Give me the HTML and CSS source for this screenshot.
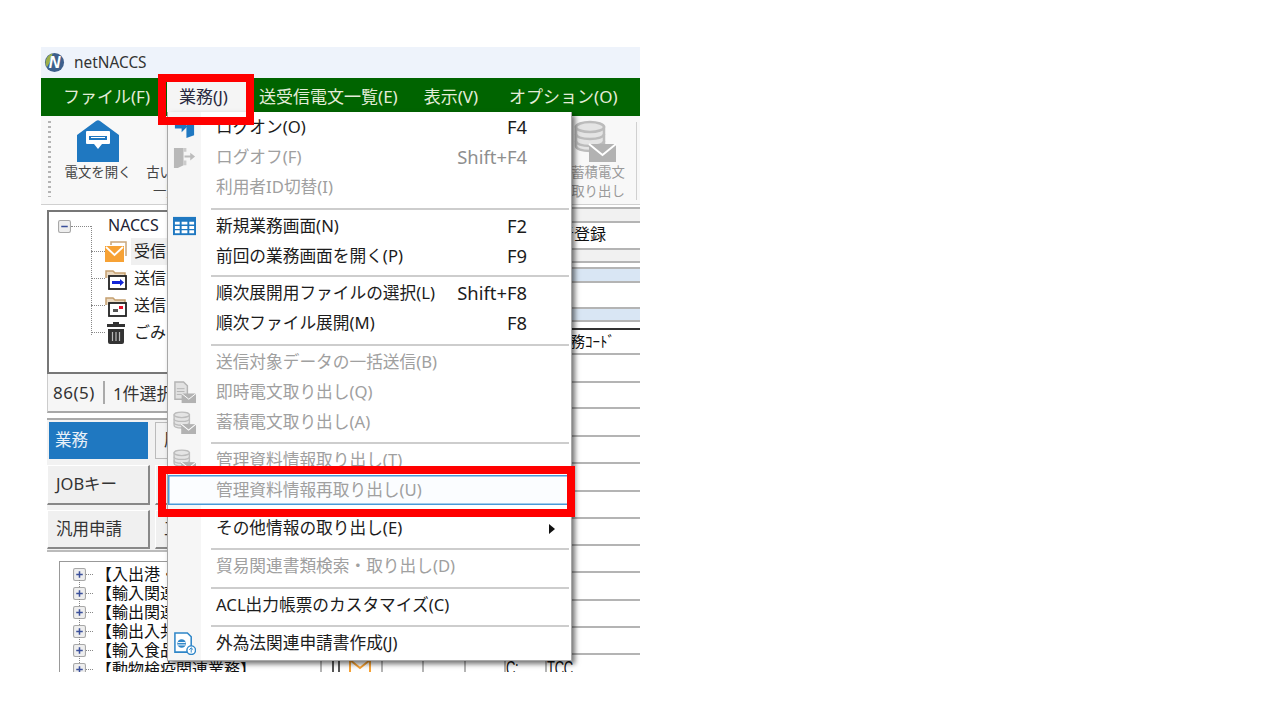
FILE: index.html
```html
<!DOCTYPE html>
<html lang="ja">
<head>
<meta charset="utf-8">
<title>netNACCS</title>
<link rel="stylesheet" href="styles.css">
</head>
<body>
<svg class="defs" width="0" height="0" aria-hidden="true">
  <symbol id="dbmail" viewBox="0 0 42 42">
    <g fill="#e4e4e4" stroke="#bcbcbc" stroke-width="2.500">
      <path d="M2 26V7h28v19c0 3-6 5-14 5S2 29 2 26z"/>
      <ellipse cx="16" cy="7" rx="14" ry="5"/>
      <path d="M2 14c0 3 6 5 14 5s14-2 14-5M2 21c0 3 6 5 14 5s14-2 14-5" fill="none"/>
    </g>
    <path d="M15 24h27v18H15z" fill="#b2b2b2"/>
    <path d="M15 24l13.500 11L42 24" fill="none" stroke="#fff" stroke-width="2"/>
  </symbol>
  <symbol id="docmail" viewBox="0 0 24 24">
    <path d="M2 1h9l4 4v14H2z" fill="#e2e2e2" stroke="#b4b4b4" stroke-width="1.500"/>
    <path d="M4 8h8M4 11h8M4 14h5" stroke="#b4b4b4"/>
    <path d="M9 13h15v10H9z" fill="#b2b2b2"/>
    <path d="M9 13l7.500 6L24 13" fill="none" stroke="#fff"/>
  </symbol>
  <symbol id="treeplus" viewBox="0 0 12 12">
    <rect x=".5" y=".5" width="11" height="11" rx="1.500" fill="#eee" stroke="#a8a8a8"/>
    <path d="M3 6h6M6 3v6" stroke="#3a4f9a" stroke-width="1.400"/>
  </symbol>
</svg>

<div class="window">
  <header class="titlebar">
    <svg class="logo" viewBox="0 0 22 22">
      <circle cx="11" cy="11" r="10" fill="#3d5f8c"/>
      <path d="M3 16A10 10 0 0 1 9 1.500L6 11z" fill="#9db04a"/>
      <text class="logo-n" x="11" y="17">N</text>
    </svg>
    <span class="app-name">netNACCS</span>
  </header>

  <nav class="menubar">
    <span class="menu-item">ファイル(F)</span>
    <span class="menu-item active">業務(J)</span>
    <span class="menu-item">送受信電文一覧(E)</span>
    <span class="menu-item">表示(V)</span>
    <span class="menu-item">オプション(O)</span>
  </nav>

  <section class="toolbar">
    <div class="gripper"></div>
    <div class="tool">
      <svg class="tool-icon" viewBox="0 0 42 42">
        <path d="M0 15L19 1q2-1.500 4 0l19 14v27H0z" fill="#1f78c1"/>
        <path d="M10 11h22q1 0 1 1v11q0 1-1 1H25l-4 5-4-5h-7q-1 0-1-1V12q0-1 1-1z" fill="#fff"/>
        <path d="M12 16h18v4H12z" fill="#1f78c1"/>
        <path d="M14 17.500h14" stroke="#fff"/>
      </svg>
      <span>電文を開く</span>
    </div>
    <div class="tool tool-old">
      <svg class="tool-icon" viewBox="0 0 42 42">
        <rect x="2" y="2" width="38" height="38" fill="none" stroke="#1f78c1" stroke-width="4" stroke-dasharray="5 4"/>
      </svg>
      <span>古い電文</span>
      <span>一覧表</span>
    </div>
    <div class="spacer"></div>
    <div class="tool tool-off">
      <svg class="tool-icon"><use href="#dbmail"/></svg>
      <span>蓄積電文</span>
      <span>取り出し</span>
    </div>
    <div class="tool-sep"></div>
  </section>

  <main class="main">
    <aside class="left">
      <div class="tree-box">
        <div class="tree-root">
          <svg class="tree-toggle" viewBox="0 0 12 12">
            <rect x=".5" y=".5" width="11" height="11" rx="1.500" fill="#eee" stroke="#a8a8a8"/>
            <path d="M3 6h6" stroke="#3a4f9a" stroke-width="1.400"/>
          </svg>
          <span class="root-name">NACCS</span>
        </div>
        <ul class="tree-list">
          <li class="tree-row">
            <svg class="tree-icon" viewBox="0 0 22 22">
              <path d="M6 4V1h15v14" fill="none" stroke="#c9a77c" stroke-width="1.500"/>
              <path d="M0 5h19v16H0z" fill="#f7a235"/>
              <path d="M1 6l8.500 8L18 6" fill="none" stroke="#fff" stroke-width="1.800"/>
            </svg>
            <span class="tree-label selected">受信</span>
          </li>
          <li class="tree-row">
            <svg class="tree-icon" viewBox="0 0 22 22">
              <path d="M1 10V3h7l2 2h10v3" fill="#ead9c2" stroke="#c5a070" stroke-width="1.500"/>
              <rect x="4" y="8" width="17" height="13" fill="#fff" stroke="#222" stroke-width="1.800"/>
              <path d="M7 13h8v-2l4 3.500-4 3.500v-2H7z" fill="#1226d8"/>
            </svg>
            <span class="tree-label">送信</span>
          </li>
          <li class="tree-row">
            <svg class="tree-icon" viewBox="0 0 22 22">
              <path d="M1 10V3h7l2 2h10v3" fill="#ead9c2" stroke="#c5a070" stroke-width="1.500"/>
              <rect x="4" y="8" width="17" height="13" fill="#fff" stroke="#222" stroke-width="1.800"/>
              <path d="M8 14h5v3H8z" fill="#555"/>
              <path d="M14 11h4v3h-4z" fill="#e8102a"/>
            </svg>
            <span class="tree-label">送信</span>
          </li>
          <li class="tree-row">
            <svg class="tree-icon" viewBox="0 0 22 22">
              <path d="M8 0h6v2h6v3H2V2h6z" fill="#333"/>
              <path d="M3 7h16v13q0 2-2 2H5q-2 0-2-2z" fill="#333"/>
              <path d="M7.500 10v9M11 10v9M14.500 10v9" stroke="#bbb" stroke-width="1.200"/>
            </svg>
            <span class="tree-label">ごみ</span>
          </li>
        </ul>
      </div>

      <div class="status">
        <span class="count">86(5)</span>
        <span class="selection">1件選択</span>
      </div>

      <div class="tabs">
        <div class="tab-row tab-row-first">
          <span class="tab tab-on">業務</span>
          <span class="tab tab-next">履</span>
        </div>
        <div class="tab-row tab-row-job">
          <span class="tab tab-raised">JOBキー</span>
          <span class="tab tab-next tab-raised"></span>
        </div>
        <div class="tab-row">
          <span class="tab tab-raised">汎用申請</span>
          <span class="tab tab-next tab-raised">工</span>
        </div>
      </div>

      <div class="job-tree">
        <div class="job-row"><svg class="job-plus"><use href="#treeplus"/></svg><span>【入出港・</span></div>
        <div class="job-row"><svg class="job-plus"><use href="#treeplus"/></svg><span>【輸入関連</span></div>
        <div class="job-row"><svg class="job-plus"><use href="#treeplus"/></svg><span>【輸出関連</span></div>
        <div class="job-row"><svg class="job-plus"><use href="#treeplus"/></svg><span>【輸出入共</span></div>
        <div class="job-row"><svg class="job-plus"><use href="#treeplus"/></svg><span>【輸入食品</span></div>
        <div class="job-row"><svg class="job-plus"><use href="#treeplus"/></svg><span>【動物検疫関連業務】</span></div>
      </div>
    </aside>

    <section class="grid">
      <div class="g-row r4"></div>
      <div class="g-row r14 shade"></div>
      <div class="g-row r27 has-text"><span class="reg">者登録</span></div>
      <div class="g-row r13 shade"></div>
      <div class="g-row r6"></div>
      <div class="g-row r14 blue"></div>
      <div class="g-row r26"></div>
      <div class="g-row r13 blue"></div>
      <div class="g-row r8 dark"></div>
      <div class="g-row r25 has-code"><span class="code">務ｺｰﾄﾞ</span></div>
      <div class="g-row r28"></div>
      <div class="g-row r26"></div>
      <div class="g-row r28"></div>
      <div class="g-row r27"></div>
      <div class="g-row r28"></div>
      <div class="g-row r27"></div>
      <div class="g-row r27"></div>
      <div class="g-row r27"></div>
      <div class="g-row r28"></div>
      <div class="g-row r27"></div>
      <div class="g-row r27"></div>
      <div class="g-strip">
        <span class="cell c12"></span>
        <span class="cell c6"></span>
        <span class="cell c43">
          <svg class="mail-mini" viewBox="0 0 22 16">
            <rect x="1" y="1" width="20" height="14" fill="none" stroke="#f7a235" stroke-width="2"/>
            <path d="M1 2l10 8 10-8" fill="none" stroke="#f7a235" stroke-width="2"/>
          </svg>
        </span>
        <span class="cell c41"></span>
        <span class="cell c42"></span>
        <span class="cell c40"></span>
        <span class="cell c41"><span class="tall">C:</span></span>
        <span class="cell c-last"><span class="tall">TCC</span></span>
      </div>
    </section>
  </main>

  <div class="dropdown">
    <div class="dd-row">
      <span class="dd-ico">
        <svg viewBox="0 0 24 24"><path d="M14 1h8v19l-8 3z" fill="#1f78c1"/><path d="M2 9h7V5l6 6-6 6v-4H2z" fill="#1f78c1"/></svg>
      </span>
      <span class="dd-text">ログオン(O)</span><span class="dd-key">F4</span>
    </div>
    <div class="dd-row off">
      <span class="dd-ico">
        <svg viewBox="0 0 24 24"><path d="M1 2h10v18l-6 3H1z" fill="#b8b8b8"/><path d="M11 2h3v4h-3zM11 15h3v5h-3z" fill="#ccc"/><path d="M12 10h6V7l5 4-5 4v-3h-6z" fill="#bcbcbc"/></svg>
      </span>
      <span class="dd-text">ログオフ(F)</span><span class="dd-key">Shift+F4</span>
    </div>
    <div class="dd-row off"><span class="dd-ico"></span><span class="dd-text">利用者ID切替(I)</span></div>
    <div class="dd-sep s9"></div>
    <div class="dd-row">
      <span class="dd-ico">
        <svg viewBox="0 0 24 20"><rect width="24" height="19" fill="#1f78c1"/><path d="M2 5h5v3H2zM9 5h6v3H9zM17 5h5v3h-5zM2 9.500h5v3H2zM9 9.500h6v3H9zM17 9.500h5v3h-5zM2 14h5v3H2zM9 14h6v3H9zM17 14h5v3h-5z" fill="#fff"/></svg>
      </span>
      <span class="dd-text">新規業務画面(N)</span><span class="dd-key">F2</span>
    </div>
    <div class="dd-row"><span class="dd-ico"></span><span class="dd-text">前回の業務画面を開く(P)</span><span class="dd-key">F9</span></div>
    <div class="dd-sep s7"></div>
    <div class="dd-row"><span class="dd-ico"></span><span class="dd-text">順次展開用ファイルの選択(L)</span><span class="dd-key">Shift+F8</span></div>
    <div class="dd-row"><span class="dd-ico"></span><span class="dd-text">順次ファイル展開(M)</span><span class="dd-key">F8</span></div>
    <div class="dd-sep s9"></div>
    <div class="dd-row off"><span class="dd-ico"></span><span class="dd-text">送信対象データの一括送信(B)</span></div>
    <div class="dd-row off"><span class="dd-ico"><svg viewBox="0 0 24 24"><use href="#docmail"/></svg></span><span class="dd-text">即時電文取り出し(Q)</span></div>
    <div class="dd-row off"><span class="dd-ico"><svg viewBox="0 0 24 24"><use href="#dbmail"/></svg></span><span class="dd-text">蓄積電文取り出し(A)</span></div>
    <div class="dd-sep"></div>
    <div class="dd-row off"><span class="dd-ico"><svg viewBox="0 0 24 24"><use href="#dbmail"/></svg></span><span class="dd-text">管理資料情報取り出し(T)</span></div>
    <div class="dd-row off hl"><span class="dd-ico"></span><span class="dd-text">管理資料情報再取り出し(U)</span></div>
    <div class="dd-sep"></div>
    <div class="dd-row"><span class="dd-ico"></span><span class="dd-text">その他情報の取り出し(E)</span><span class="dd-arrow"></span></div>
    <div class="dd-sep"></div>
    <div class="dd-row off"><span class="dd-ico"></span><span class="dd-text">貿易関連書類検索・取り出し(D)</span></div>
    <div class="dd-sep s9"></div>
    <div class="dd-row"><span class="dd-ico"></span><span class="dd-text">ACL出力帳票のカスタマイズ(C)</span></div>
    <div class="dd-sep"></div>
    <div class="dd-row">
      <span class="dd-ico">
        <svg viewBox="0 0 24 24"><path d="M2 1h13l4 4v16H2z" fill="#fff" stroke="#2f86c8" stroke-width="1.600"/><circle cx="9" cy="12" r="4.500" fill="#2f86c8"/><path d="M5 11h8M5 13.500h8" stroke="#fff"/><circle cx="19" cy="19" r="4.500" fill="#fff" stroke="#2f86c8" stroke-width="1.500"/><path d="M19 16.500v5M17 18.500l2-2 2 2" fill="none" stroke="#2f86c8"/></svg>
      </span>
      <span class="dd-text">外為法関連申請書作成(J)</span>
    </div>
  </div>

  <div class="callout callout-menu"></div>
  <div class="callout callout-item"></div>
</div>
</body>
</html>
```

FILE: styles.css
```css
* {
  box-sizing: border-box;
}

html,
body {
  margin: 0;
  height: 100%;
  background: #fff;
}

body {
  padding: 47px 0 0 41px;
  font-family: "Noto Sans", "Noto Sans CJK JP", sans-serif;
  color: #222;
  overflow: hidden;
}

.defs {
  position: absolute;
}

.window {
  position: relative;
  width: 599px;
  height: 625px;
  overflow: hidden;
  background: #fff;
}

/* title bar */
.titlebar {
  display: flex;
  align-items: center;
  height: 31px;
  padding: 0 0 1px 3px;
  background: #eef3fb;
}

.logo {
  width: 21px;
  height: 21px;
}

.logo-n {
  fill: #fff;
  font: italic 700 17px "Liberation Sans", sans-serif;
  text-anchor: middle;
}

.app-name {
  margin-left: 9px;
  font-size: 15.400px;
  color: #333;
}

/* menu bar */
.menubar {
  display: flex;
  height: 38px;
  padding: 4px 0 0 9px;
  background: #006400;
  color: #e4ecd8;
  font-size: 17px;
}

.menu-item {
  height: 30px;
  padding: 0 13px;
  line-height: 30px;
  white-space: nowrap;
}

.menu-item:last-child {
  margin-left: 5px;
}

.menu-item.active {
  width: 79px;
  margin-left: 4px;
  padding: 0 0 0 12px;
  background: #f5f5f5;
  color: #2a2a40;
}

/* toolbar */
.toolbar {
  display: flex;
  height: 89px;
  padding-left: 7px;
  background: #f8f8f8;
  border-bottom: 1px solid #d0d0d0;
}

.gripper {
  width: 3px;
  height: 76px;
  margin-top: 5px;
  background: repeating-linear-gradient(#b4b4b4 0 2px, transparent 2px 5px);
}

.tool {
  display: flex;
  flex-direction: column;
  align-items: center;
  flex: none;
  width: 68px;
  margin-left: 13px;
  font-size: 13.400px;
  line-height: 19px;
  color: #444;
  white-space: nowrap;
}

.tool-icon {
  width: 42px;
  height: 42px;
  margin: 4px 0 1px;
  flex: none;
}

.tool-old {
  width: 54px;
  margin-left: 14px;
}

.tool-old .tool-icon {
  margin-left: 30px;
}

.tool-off {
  width: 54px;
  margin-left: 0;
  color: #9a9a9a;
}

.tool-off .tool-icon {
  margin-right: 6px;
}

.spacer {
  flex: 1;
}

.tool-sep {
  width: 1px;
  height: 78px;
  margin: 6px 3px 0 11px;
  background: #d0d0d0;
}

/* main */
.main {
  display: flex;
  height: 467px;
}

.left {
  display: flex;
  flex-direction: column;
  flex: none;
  width: 279px;
  padding: 5px 0 0 6px;
}

.tree-box {
  flex: none;
  height: 164px;
  padding: 0 0 0 9px;
  background: #fff;
  border: 2px solid #777;
}

.tree-root {
  position: relative;
  display: flex;
  align-items: center;
  height: 26px;
  font-size: 16px;
}

.tree-root::after {
  content: "";
  position: absolute;
  left: 13px;
  top: 14px;
  width: 20px;
  border-top: 1px dotted #888;
}

.tree-toggle {
  width: 13px;
  height: 13px;
  flex: none;
  margin-top: 2px;
}

.root-name {
  margin-left: 37px;
  color: #223;
}

.tree-list {
  position: relative;
  margin: 0;
  padding: 0 0 0 47px;
  list-style: none;
}

.tree-list::before {
  content: "";
  position: absolute;
  left: 33px;
  top: -12px;
  height: 109px;
  border-left: 1px dotted #888;
}

.tree-row {
  position: relative;
  display: flex;
  align-items: center;
  height: 27px;
  font-size: 16px;
}

.tree-row::before {
  content: "";
  position: absolute;
  left: -14px;
  top: 13px;
  width: 14px;
  border-top: 1px dotted #888;
}

.tree-icon {
  width: 22px;
  height: 22px;
  flex: none;
}

.tree-label {
  height: 27px;
  margin-left: 4px;
  padding: 0 3px;
  line-height: 27px;
}

.tree-label.selected {
  background: #f0f0f0;
}

.status {
  display: flex;
  flex: none;
  align-items: center;
  height: 39px;
  font-size: 17px;
  color: #333;
  border-bottom: 2px solid #a8a8a8;
  border-left: 1px solid #ccc;
  background: #f6f6f6;
}

.count {
  padding: 0 8px 0 5px;
  letter-spacing: .5px;
  border-right: 2px solid #aaa;
}

.selection {
  margin-left: 8px;
}

.tabs {
  display: flex;
  flex: none;
  flex-direction: column;
  gap: 5px;
  height: 134px;
  margin-top: 5px;
  padding-top: 2px;
  background: #f2f2f2;
  border-top: 2px solid #aaa;
  border-bottom: 2px solid #bbb;
}

.tab-row {
  display: flex;
  flex: none;
  height: 39px;
  gap: 5px;
}

.tab-row-first {
  height: 37px;
  margin-bottom: 1px;
}

.tab-row-job {
  height: 40px;
}

.tab {
  display: flex;
  align-items: center;
  flex: none;
  width: 103px;
  padding: 0 0 3px 8px;
  font-size: 16.500px;
  color: #333;
  white-space: nowrap;
}

.tab-on {
  width: 99px;
  margin: 0 2px;
  padding: 0 0 4px 6px;
  background: #1f78c1;
  color: #e8f0f8;
}

.tab-next {
  width: 120px;
  border: 1px solid #bbb;
}

.tab-raised {
  background: #f0f0f0;
  border-top: 1px solid #fff;
  border-left: 1px solid #fff;
  border-right: 2px solid #888;
  border-bottom: 2px solid #888;
}

.job-tree {
  flex: 1;
  min-height: 0;
  margin: 9px 0 0 12px;
  padding: 3px 0 0 13px;
  border-top: 1px solid #999;
  border-left: 1px solid #999;
}

.job-row {
  position: relative;
  display: flex;
  align-items: center;
  height: 19px;
  font-size: 16px;
  line-height: 19px;
  color: #111;
  white-space: nowrap;
}

.job-row::before {
  content: "";
  position: absolute;
  left: 13px;
  top: 9px;
  width: 7px;
  border-top: 1px dotted #888;
}

.job-row::after {
  content: "";
  position: absolute;
  left: 6px;
  top: -4px;
  height: 7px;
  border-left: 1px dotted #888;
}

.job-row:first-child::after {
  display: none;
}

.job-plus {
  width: 13px;
  height: 13px;
  flex: none;
  margin-right: 10px;
}

/* grid on the right */
.grid {
  display: flex;
  flex-direction: column;
  flex: 1;
  min-width: 0;
  font-size: 14px;
  color: #111;
}

.g-row {
  flex: none;
  border-bottom: 2px solid #b4b4b4;
  background: #fff;
}

.r4 { height: 4px; }
.r6 { height: 6px; }
.r8 { height: 8px; }
.r13 { height: 13px; }
.r14 { height: 14px; }
.r25 { height: 25px; }
.r26 { height: 26px; }
.r27 { height: 27px; }
.r28 { height: 28px; }

.shade {
  background: #f1f1f1;
}

.blue {
  background: #d9e6f4;
}

.dark {
  border-bottom-color: #333;
}

.has-text {
  display: flex;
  align-items: center;
  padding: 0 0 5px 238px;
  white-space: nowrap;
}

.has-code {
  display: flex;
  align-items: center;
  padding: 0 0 3px 250px;
  white-space: nowrap;
}

.reg {
  font-size: 16px;
}

.code {
  font-size: 15px;
}

.g-strip {
  display: flex;
  flex: 1;
  font-family: "Liberation Sans", sans-serif;
  font-size: 13px;
  line-height: 13px;
}

.cell {
  flex: none;
  padding: 3px 0 0 0;
  border-left: 2px solid #b4b4b4;
  white-space: nowrap;
}

.tall {
  display: block;
  letter-spacing: -.3px;
  transform: scaleY(1.500);
  transform-origin: left top;
}

.c12 { width: 12px; }
.c6 { width: 6px; border-left-color: #555; }
.c43 { width: 43px; border-left-color: #555; }
.c40 { width: 40px; }
.c41 { width: 41px; }
.c42 { width: 42px; }

.mail-mini {
  display: block;
  width: 22px;
  height: 16px;
  margin: 0 0 0 9px;
}

/* dropdown */
.dropdown {
  position: absolute;
  left: 126px;
  top: 65px;
  width: 405px;
  height: 549px;
  background: linear-gradient(90deg, #f6f6f6 33px, #fff 33px);
  border: 1px solid #a8a8a8;
  border-top-width: 0;
  box-shadow: 3px 3px 5px rgba(0, 0, 0, .55);
  font-size: 16.700px;
  color: #1c1c1c;
}

.dd-row {
  display: flex;
  align-items: center;
  height: 30px;
  padding-bottom: 2px;
  white-space: nowrap;
}

.dd-ico {
  display: flex;
  align-items: center;
  flex: none;
  width: 48px;
  margin-top: 2px;
  padding-left: 5px;
}

.dd-ico svg {
  width: 23px;
  height: 23px;
}

.dd-text {
  flex: 1;
}

.dd-key {
  padding-right: 44px;
  font-size: 18.400px;
}

.dd-arrow {
  width: 0;
  height: 0;
  margin: 4px 16px 0 0;
  border-left: 6px solid #111;
  border-top: 5px solid transparent;
  border-bottom: 5px solid transparent;
}

.off {
  color: #a0a0a0;
}

.off .dd-key {
  color: #8e8e8e;
}

.hl {
  box-shadow: inset 0 0 0 1.500px #4a9ad8;
  background: #fbfdff;
}

.dd-sep {
  height: 8px;
  margin: 0 2px 0 43px;
  padding-top: 5px;
}

.dd-sep::before {
  content: "";
  display: block;
  height: 2px;
  background: #cdcdcd;
}

.s7 {
  height: 7px;
  padding-top: 4px;
}

.s9 {
  height: 9px;
  padding-top: 6px;
}

/* red call-outs */
.callout {
  position: absolute;
  border: 8px solid #f00;
}

.callout-menu {
  left: 117px;
  top: 27px;
  width: 96px;
  height: 51px;
}

.callout-item {
  left: 117px;
  top: 419px;
  width: 417px;
  height: 51px;
}
```
